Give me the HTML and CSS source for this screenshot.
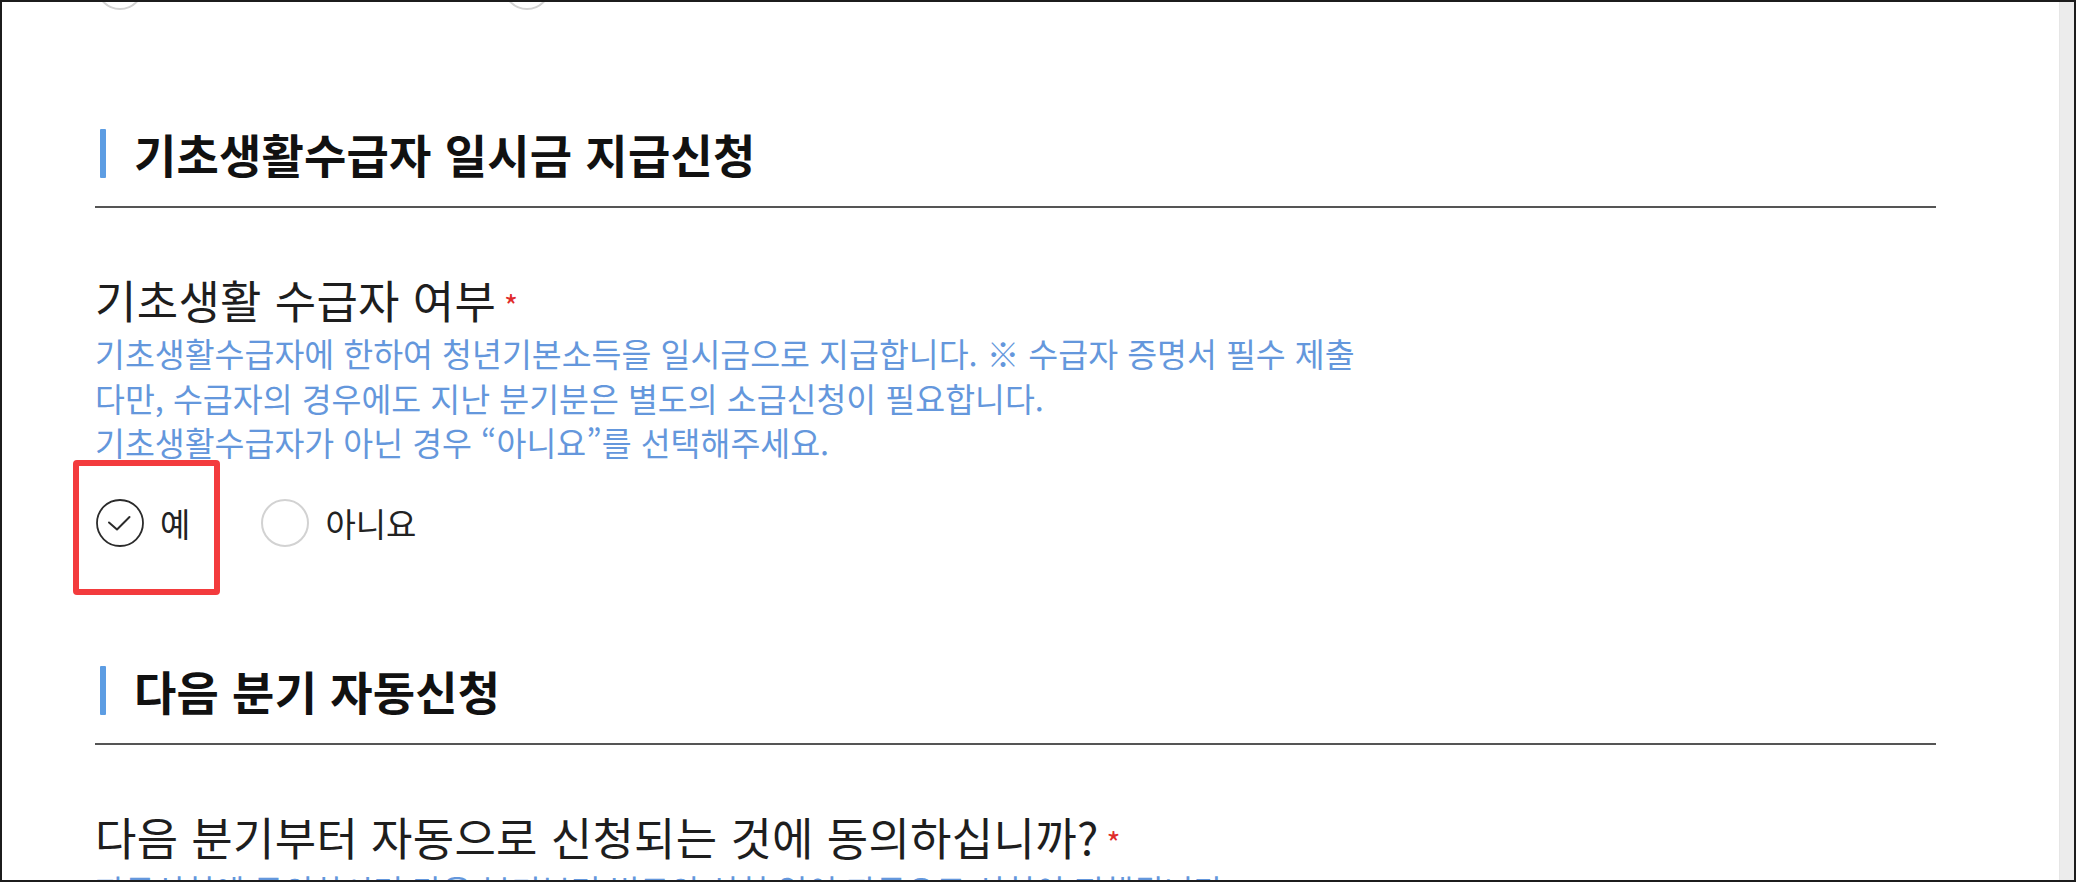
FILE: index.html
```html
<!DOCTYPE html>
<html lang="ko">
<head>
<meta charset="utf-8">
<title>기초생활수급자 일시금 지급신청</title>
<link rel="stylesheet" href="styles.css">
</head>
<body>
<div class="frame">
  <div class="page">
    <div class="content">
      <div class="radio-group prev">
        <span class="radio-item wide"><span class="circle off"></span></span>
        <span class="radio-item"><span class="circle off"></span></span>
      </div>

      <section class="section first">
        <div class="sec-head"><h2 class="sec-title">기초생활수급자 일시금 지급신청</h2></div>
        <div class="field">
          <p class="label">기초생활 수급자 여부<span class="req">*</span></p>
          <p class="desc">기초생활수급자에 한하여 청년기본소득을 일시금으로 지급합니다. ※ 수급자 증명서 필수 제출<br>다만, 수급자의 경우에도 지난 분기분은 별도의 소급신청이 필요합니다.<br>기초생활수급자가 아닌 경우 “아니요”를 선택해주세요.</p>
          <div class="radio-group options">
            <span class="radio-item yes">
              <span class="highlight"></span>
              <svg class="circle-svg" viewBox="0 0 48 48" width="48" height="48"><circle cx="24" cy="24" r="23" fill="none" stroke="#2b2b2b" stroke-width="1.8"/><path d="M13 23.5 L21 30.5 L33.5 18" fill="none" stroke="#2b2b2b" stroke-width="2" stroke-linecap="round" stroke-linejoin="round"/></svg>
              <span class="opt-text">예</span>
            </span>
            <span class="radio-item">
              <span class="circle off"></span>
              <span class="opt-text">아니요</span>
            </span>
          </div>
        </div>
      </section>

      <section class="section second">
        <div class="sec-head"><h2 class="sec-title">다음 분기 자동신청</h2></div>
        <div class="field">
          <p class="label">다음 분기부터 자동으로 신청되는 것에 동의하십니까?<span class="req">*</span></p>
          <p class="desc">자동신청에 동의하시면 다음 분기부터 별도의 신청 없이 자동으로 신청이 진행됩니다.</p>
        </div>
      </section>
    </div>
  </div>
  <div class="scrollbar"></div>
</div>
</body>
</html>
```

FILE: styles.css
```css
* { box-sizing: border-box; }

html, body {
  margin: 0;
  padding: 0;
  background: #ffffff;
}

body {
  font-family: "Noto Sans CJK KR", "Noto Sans", sans-serif;
  color: #222222;
}

.frame {
  width: 2076px;
  height: 882px;
  border: 2px solid #1c1c1c;
  display: flex;
  overflow: hidden;
  background: #ffffff;
}

.page {
  flex: 1;
  overflow: hidden;
  background: #ffffff;
}

.scrollbar {
  width: 15px;
  background: #ececec;
  border-left: 1px solid #e6e6e6;
}

.content {
  padding: 0 123px 0 93px;
}

.radio-group {
  display: flex;
  align-items: center;
}

.prev {
  margin-top: -40px;
  height: 48px;
  padding-left: 1px;
}

.radio-item {
  display: flex;
  align-items: center;
  gap: 16px;
  position: relative;
}

.radio-item.wide {
  width: 407px;
}

.circle {
  display: block;
  width: 48px;
  height: 48px;
  border-radius: 50%;
  flex: none;
}

.circle.off {
  border: 2px solid #d2d2d2;
}

.circle-svg {
  display: block;
  flex: none;
}

.section.first {
  margin-top: 119px;
}

.section.second {
  margin-top: 119px;
}

.sec-head {
  padding-bottom: 28px;
  border-bottom: 2px solid #555555;
}

.sec-title {
  margin: 0;
  display: flex;
  align-items: center;
  height: 49px;
  font-size: 46px;
  font-weight: 700;
  line-height: 49px;
  color: #111111;
  letter-spacing: 0.2px;
}

.sec-title::before {
  content: "";
  display: block;
  width: 6px;
  height: 49px;
  margin-left: 5px;
  margin-right: 28px;
  background: #5d9de3;
  border-radius: 1px;
}

.field {
  margin-top: 67px;
}

.label {
  margin: 0;
  font-size: 45px;
  line-height: 50px;
  color: #1e1e1e;
  font-weight: 400;
  letter-spacing: 0.3px;
}

.req {
  color: #e02b2b;
  font-size: 30px;
  margin-left: 8px;
  position: relative;
  top: -1px;
}

.desc {
  margin: 0;
  font-size: 32.5px;
  line-height: 44.5px;
  color: #6497dc;
}

.options {
  margin-top: 34px;
  padding-left: 1px;
  gap: 71px;
}

.opt-text {
  font-size: 33px;
  line-height: 48px;
  color: #222222;
}

.highlight {
  position: absolute;
  left: -23px;
  top: -39px;
  width: 147px;
  height: 135px;
  border: 6px solid #f33b3d;
  border-radius: 4px;
  pointer-events: none;
}
```
